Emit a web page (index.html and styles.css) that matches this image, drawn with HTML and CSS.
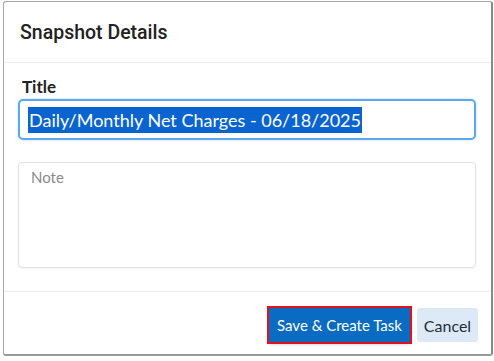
FILE: index.html
```html
<!DOCTYPE html>
<html lang="en">
<head>
    <meta charset="UTF-8">
    <title>Snapshot Details</title>
    <link rel="stylesheet" href="styles.css">
</head>
<body>
    <div class="dialog">
        <div class="dialog-header">
            <h2>Snapshot Details</h2>
        </div>

        <div class="dialog-body">
            <label class="field-label">Title</label>
            <div class="title-input">
                <span class="selected">Daily/Monthly Net Charges - 06/18/2025</span>
            </div>
            <div class="note-box">
                <span class="placeholder">Note</span>
            </div>
        </div>

        <div class="dialog-footer">
            <button class="btn btn-primary">Save &amp; Create Task</button>
            <button class="btn btn-light">Cancel</button>
        </div>
    </div>
</body>
</html>
```

FILE: styles.css
```css
* {
    margin: 0;
    padding: 0;
    box-sizing: border-box;
}

body {
    background: #fff;
    font-family: Lato, 'Liberation Sans', sans-serif;
    color: #333;
    padding: 1px 0 0 3px;
}

.dialog {
    width: 490px;
    height: 355px;
    background: #fff;
    border: 1px solid #a8a8a8;
    border-right: 2px solid #8a8a8a;
    border-bottom: 2px solid #9a9a9a;
    border-radius: 3px;
    display: flex;
    flex-direction: column;
}

.dialog-header {
    height: 61px;
    padding: 0 16px;
    display: flex;
    align-items: center;
    border-bottom: 1px solid #eeeeee;
}

.dialog-header h2 {
    font-family: Roboto, sans-serif;
    font-size: 19.5px;
    font-weight: 500;
    color: #222;
}

.dialog-body {
    padding: 14px 15px 0 14px;
    height: 229px;
    border-bottom: 1px solid #eeeeee;
}

.field-label {
    display: block;
    margin-left: 4px;
    font-size: 17px;
    font-weight: bold;
    color: #222;
    line-height: 20px;
}

.title-input {
    margin-top: 2px;
    height: 41px;
    border: 2px solid #5aa9ef;
    border-radius: 5px;
    padding: 6px 8px;
    display: flex;
    align-items: center;
    box-shadow: 0 0 2px rgba(90, 169, 239, 0.5);
}

.selected {
    background: #0a64d0;
    color: #fff;
    font-size: 18px;
    line-height: 26px;
    padding: 0 1px;
}

.note-box {
    margin-top: 22px;
    height: 106px;
    border: 1px solid #e2e2e2;
    border-radius: 4px;
    padding: 4px 12px;
    box-shadow: 0 1px 2px rgba(0, 0, 0, 0.06);
}

.placeholder {
    color: #8a8a8a;
    font-size: 15px;
}

.dialog-footer {
    flex: 1;
    display: flex;
    justify-content: flex-end;
    align-items: center;
    gap: 7px;
    padding: 4px 13px 0 0;
}

.btn {
    height: 34px;
    border: none;
    border-radius: 3px;
    font-family: Lato, sans-serif;
    font-size: 15px;
    padding: 0 6px;
    white-space: nowrap;
    cursor: pointer;
}

.btn-primary {
    background: #0a6bc2;
    color: #fff;
    outline: 2px solid #e3121a;
    outline-offset: 0;
    border-radius: 0;
    width: 141px;
    box-shadow: 0 2px 4px rgba(0, 0, 0, 0.2);
}

.btn-light {
    background: #dde9f6;
    color: #22303e;
    font-size: 16px;
    width: 61px;
}
```
